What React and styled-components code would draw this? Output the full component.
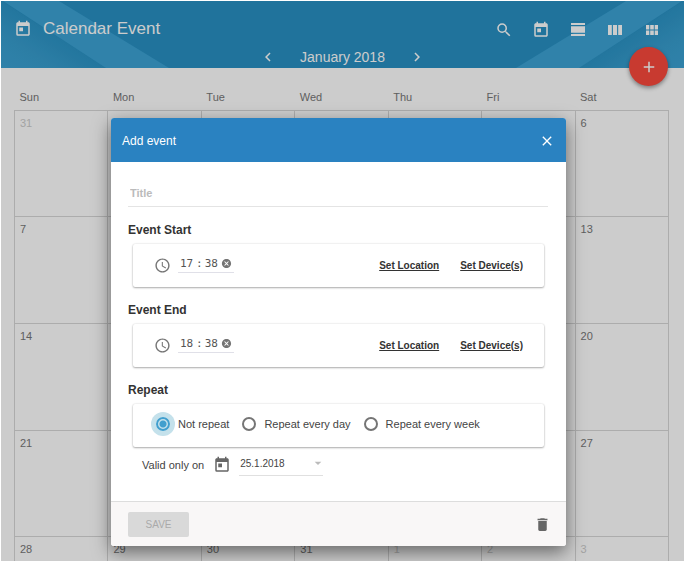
import { useState } from "react";
import styled, { createGlobalStyle } from "styled-components";
import {
    MdAccessTime,
    MdAdd,
    MdArrowDropDown,
    MdCancel,
    MdChevronLeft,
    MdChevronRight,
    MdClose,
    MdDelete,
    MdSearch,
    MdToday,
} from "react-icons/md";

const WEEKDAYS = ["Sun", "Mon", "Tue", "Wed", "Thu", "Fri", "Sat"];

// january 2018, padded with the days of the months around it
const WEEKS = [
    [31, 1, 2, 3, 4, 5, 6],
    [7, 8, 9, 10, 11, 12, 13],
    [14, 15, 16, 17, 18, 19, 20],
    [21, 22, 23, 24, 25, 26, 27],
    [28, 29, 30, 31, 1, 2, 3],
];

const REPEAT_OPTIONS = [
    { value: "none", label: "Not repeat" },
    { value: "day", label: "Repeat every day" },
    { value: "week", label: "Repeat every week" },
];

function isOutside(week, day) {
    return (week === 0 && day > 7) || (week === 4 && day < 8);
}

function ViewDayIcon() {
    return (
        <svg width="18" height="18" viewBox="0 0 18 18" fill="currentColor">
            <path d="M2 2h14v2H2zM2 5.2h14v6.6H2zM2 13h14v2H2z" />
        </svg>
    );
}

function ViewWeekIcon() {
    return (
        <svg width="18" height="18" viewBox="0 0 18 18" fill="currentColor">
            <path d="M2 4h3.8v10H2zM7 4h4v10H7zM12.2 4H16v10h-3.8z" />
        </svg>
    );
}

function ViewModuleIcon() {
    return (
        <svg width="18" height="18" viewBox="0 0 18 18" fill="currentColor">
            <path d="M3 4h3.3v4.5H3zM7.2 4h3.6v4.5H7.2zM11.7 4H15v4.5h-3.3zM3 9.4h3.3V14H3zM7.2 9.4h3.6V14H7.2zM11.7 9.4H15V14h-3.3z" />
        </svg>
    );
}

function Ribbon({ id }) {
    return (
        <svg width="170" height="67" viewBox="0 0 170 67">
            <defs>
                <linearGradient id={id} x1="0" y1="1" x2="0.5" y2="0.5">
                    <stop offset="0" stopColor="#3ca3d5" />
                    <stop offset="0.5" stopColor="#389ecf" />
                    <stop offset="1" stopColor="#2c94c6" />
                </linearGradient>
            </defs>
            <path d="M0 0L4 2L105 67H0z" fill={`url(#${id})`} />
            <path d="M2 0H58L168 67H105z" fill="#3ca3d5" />
        </svg>
    );
}

function TimeCard({ id, title, hours, minutes }) {
    const [time, setTime] = useState({ hours, minutes });
    return (
        <Section>
            <SectionTitle>{title}</SectionTitle>
            <Card>
                <MdAccessTime size={17} />
                <TimeField>
                    <TimeInput
                        id={`${id}-hours`}
                        aria-label={`${title} hours`}
                        value={time.hours}
                        onChange={(e) => setTime({ ...time, hours: e.target.value })}
                    />
                    <span>:</span>
                    <TimeInput
                        id={`${id}-minutes`}
                        aria-label={`${title} minutes`}
                        value={time.minutes}
                        onChange={(e) => setTime({ ...time, minutes: e.target.value })}
                    />
                    <ClearButton aria-label="Clear time" onClick={() => setTime({ hours: "", minutes: "" })}>
                        <MdCancel size={11} />
                    </ClearButton>
                </TimeField>
                <CardLinks>
                    <CardLink href="#location">Set Location</CardLink>
                    <CardLink href="#devices">Set Device(s)</CardLink>
                </CardLinks>
            </Card>
        </Section>
    );
}

export default function App() {
    const [repeat, setRepeat] = useState("none");
    return (
        <Frame>
            <GlobalStyle />
            <Page>
                <Header>
                    <RibbonLeft><Ribbon id="ribbon-left" /></RibbonLeft>
                    <RibbonRight><Ribbon id="ribbon-right" /></RibbonRight>
                    <TopBar>
                        <MdToday size={18} />
                        <AppTitle>Calendar Event</AppTitle>
                        <Toolbar>
                            <IconButton aria-label="Search"><MdSearch size={18} /></IconButton>
                            <IconButton aria-label="Today"><MdToday size={18} /></IconButton>
                            <IconButton aria-label="Day view"><ViewDayIcon /></IconButton>
                            <IconButton aria-label="Week view"><ViewWeekIcon /></IconButton>
                            <IconButton aria-label="Month view"><ViewModuleIcon /></IconButton>
                        </Toolbar>
                    </TopBar>
                    <MonthBar>
                        <IconButton aria-label="Previous month"><MdChevronLeft size={18} /></IconButton>
                        <Month>January 2018</Month>
                        <IconButton aria-label="Next month"><MdChevronRight size={18} /></IconButton>
                    </MonthBar>
                    <AddButton aria-label="Add event"><MdAdd size={18} /></AddButton>
                </Header>
                <Calendar>
                    <thead>
                        <tr>
                            {WEEKDAYS.map((day) => <Weekday key={day}>{day}</Weekday>)}
                        </tr>
                    </thead>
                    <tbody>
                        {WEEKS.map((days, week) => (
                            <tr key={week}>
                                {days.map((day) => (
                                    <Day key={day} $outside={isOutside(week, day)}>{day}</Day>
                                ))}
                            </tr>
                        ))}
                    </tbody>
                </Calendar>
                <Overlay>
                    <Dialog role="dialog" aria-labelledby="dialog-title">
                        <DialogHeader>
                            <DialogTitle id="dialog-title">Add event</DialogTitle>
                            <IconButton aria-label="Close"><MdClose size={16} /></IconButton>
                        </DialogHeader>
                        <DialogBody>
                            <TitleInput aria-label="Title" placeholder="Title" />
                            <TimeCard id="start" title="Event Start" hours="17" minutes="38" />
                            <TimeCard id="end" title="Event End" hours="18" minutes="38" />
                            <Section>
                                <SectionTitle>Repeat</SectionTitle>
                                <Card>
                                    <RadioGroup>
                                        {REPEAT_OPTIONS.map((option) => (
                                            <RadioLabel key={option.value}>
                                                <Radio
                                                    type="radio"
                                                    name="repeat"
                                                    checked={repeat === option.value}
                                                    onChange={() => setRepeat(option.value)}
                                                />
                                                {option.label}
                                            </RadioLabel>
                                        ))}
                                    </RadioGroup>
                                </Card>
                            </Section>
                            <ValidRow>
                                <label htmlFor="valid-date">Valid only on</label>
                                <MdToday size={18} />
                                <DateField>
                                    <DateSelect id="valid-date" defaultValue="25.1.2018">
                                        <option>25.1.2018</option>
                                    </DateSelect>
                                    <MdArrowDropDown size={16} />
                                </DateField>
                            </ValidRow>
                        </DialogBody>
                        <DialogFooter>
                            <SaveButton disabled>SAVE</SaveButton>
                            <IconButton aria-label="Delete"><MdDelete size={17} /></IconButton>
                        </DialogFooter>
                    </Dialog>
                </Overlay>
            </Page>
        </Frame>
    );
}

const GlobalStyle = createGlobalStyle`
    * {
        box-sizing: border-box;
    }
    body {
        margin: 0;
        background: #fff;
        font-family: "Liberation Sans", Arial, sans-serif;
        font-size: 12px;
        color: #333;
    }
    button, input, select {
        font: inherit;
        color: inherit;
    }
    svg {
        display: block;
        flex-shrink: 0;
    }
`;

const Frame = styled.div`
    display: flex;
    height: 100vh;
    padding: 1px 1px 2px;
`;
const Page = styled.div`
    position: relative;
    flex: 1;
    overflow: hidden;
    background: #fff;
`;

const Header = styled.header`
    position: relative;
    height: 67px;
    background: #2890c3;
    color: #fff;
`;
const RibbonLeft = styled.div`
    position: absolute;
    top: 0;
    left: 0;
`;
const RibbonRight = styled.div`
    position: absolute;
    top: 0;
    right: 0;
    transform: scaleX(-1);
`;
const TopBar = styled.div`
    position: relative;
    display: flex;
    align-items: center;
    height: 45px;
    padding: 10px 23px 0 13px;
`;
const AppTitle = styled.h1`
    flex: 1;
    margin: 0 0 0 11px;
    font-size: 17px;
    font-weight: normal;
`;
const Toolbar = styled.div`
    display: flex;
    gap: 19px;
    margin-top: 3px;
`;
const IconButton = styled.button`
    display: flex;
    padding: 0;
    border: 0;
    background: none;
`;
const ClearButton = styled(IconButton)`
    color: #757575;
`;
const MonthBar = styled.div`
    position: relative;
    display: flex;
    align-items: center;
    justify-content: center;
    gap: 23px;
    height: 22px;
`;
const Month = styled.h2`
    margin: 0;
    font-size: 14px;
    font-weight: normal;
`;
const AddButton = styled.button`
    position: absolute;
    right: 16px;
    bottom: -18px;
    display: flex;
    align-items: center;
    justify-content: center;
    width: 39px;
    height: 39px;
    padding: 0;
    border: 0;
    border-radius: 50%;
    background: #fb493d;
    box-shadow: 0 2px 4px rgba(0, 0, 0, 0.4);
`;

const Calendar = styled.table`
    width: calc(100% - 28px);
    height: 576px;
    margin: 0 15px 0 13px;
    border-collapse: collapse;
    table-layout: fixed;
    font-size: 11px;
    color: #777;
`;
const Weekday = styled.th`
    height: 42px;
    padding: 16px 5px 0;
    font-weight: normal;
    text-align: left;
`;
const Day = styled.td`
    padding: 7px 5px;
    border: 1px solid #d8d8d8;
    line-height: 10px;
    vertical-align: top;
    color: ${(props) => (props.$outside ? "#ccc" : "#777")};
`;

const Overlay = styled.div`
    position: absolute;
    inset: 0;
    display: flex;
    align-items: flex-start;
    justify-content: center;
    padding: 117px 8px 0 0;
    background: rgba(0, 0, 0, 0.2);
`;
const Dialog = styled.section`
    width: 455px;
    overflow: hidden;
    border-radius: 3px;
    background: #fff;
    box-shadow: 0 6px 18px rgba(0, 0, 0, 0.5);
`;
const DialogHeader = styled.header`
    display: flex;
    align-items: center;
    justify-content: space-between;
    height: 44px;
    padding: 2px 11px 0;
    background: #2a82c1;
    color: #fff;
`;
const DialogTitle = styled.h2`
    margin: 0;
    font-size: 12px;
    font-weight: normal;
`;
const DialogBody = styled.div`
    padding: 18px 18px 18px 17px;
`;
const TitleInput = styled.input`
    display: block;
    width: 100%;
    height: 27px;
    padding: 0 2px;
    border: 0;
    border-bottom: 1px solid #e4e4e4;
    background: none;
    font-size: 11px;
    font-weight: bold;

    &::placeholder {
        color: #bbb;
        opacity: 1;
    }
`;
const Section = styled.section`
    margin-top: 15px;
`;
const SectionTitle = styled.h3`
    margin: 0 0 6px;
    font-size: 12px;
    line-height: 16px;
    font-weight: bold;
`;
const Card = styled.div`
    display: flex;
    align-items: center;
    height: 43px;
    margin: 0 4px 0 5px;
    padding: 0 21px;
    border-radius: 2px;
    box-shadow: 0 0 2px rgba(0, 0, 0, 0.15), 0 1px 2px rgba(0, 0, 0, 0.3);
    color: #757575;
`;
const TimeField = styled.div`
    display: flex;
    align-items: center;
    width: 56px;
    height: 19px;
    margin: 0 0 4px 7px;
    padding-left: 2px;
    border-bottom: 1px solid #e0e0e8;
    font-family: "DejaVu Sans Mono", monospace;
    font-size: 11px;
    color: #555;
    gap: 2px;
`;
const TimeInput = styled.input`
    width: 14px;
    padding: 0;
    border: 0;
    background: none;
`;
const CardLinks = styled.div`
    display: flex;
    gap: 21px;
    margin-left: auto;
`;
const CardLink = styled.a`
    font-size: 10px;
    line-height: 12px;
    font-weight: bold;
    color: #333;
`;
const RadioGroup = styled.div`
    display: flex;
    gap: 13px;
    padding: 0 0 3px 2px;
`;
const RadioLabel = styled.label`
    display: flex;
    align-items: center;
    gap: 8px;
    font-size: 11px;
    color: #444;
`;
const Radio = styled.input`
    appearance: none;
    width: 14px;
    height: 14px;
    margin: 0;
    border: 2px solid #757575;
    border-radius: 50%;

    &:checked {
        border-color: #419fce;
        background: radial-gradient(circle, #419fce 3px, #c4e1eb 4px);
        box-shadow: 0 0 0 5px #c4e1eb;
    }
`;
const ValidRow = styled.div`
    display: flex;
    align-items: center;
    height: 36px;
    padding-left: 14px;
    font-size: 11px;
    color: #666;

    label {
        margin-right: 9px;
        color: #444;
    }
`;
const DateField = styled.div`
    position: relative;
    width: 84px;
    height: 21px;
    margin-left: 8px;
    border-bottom: 1px solid #e0e0e0;

    svg {
        position: absolute;
        top: 0;
        right: -3px;
        color: #bbb;
        pointer-events: none;
    }
`;
const DateSelect = styled.select`
    appearance: none;
    width: 100%;
    height: 18px;
    padding: 0 1px;
    border: 0;
    background: none;
    font-size: 10px;
    color: #444;
`;
const DialogFooter = styled.footer`
    display: flex;
    align-items: center;
    justify-content: space-between;
    height: 45px;
    padding: 0 15px 0 17px;
    border-top: 1px solid #ddd;
    background: #f9f7f7;
    color: #666;
`;
const SaveButton = styled.button`
    width: 61px;
    height: 25px;
    padding: 0;
    border: 0;
    border-radius: 2px;
    background: #d9d9d9;
    font-size: 10px;
    color: #aaa;
`;
